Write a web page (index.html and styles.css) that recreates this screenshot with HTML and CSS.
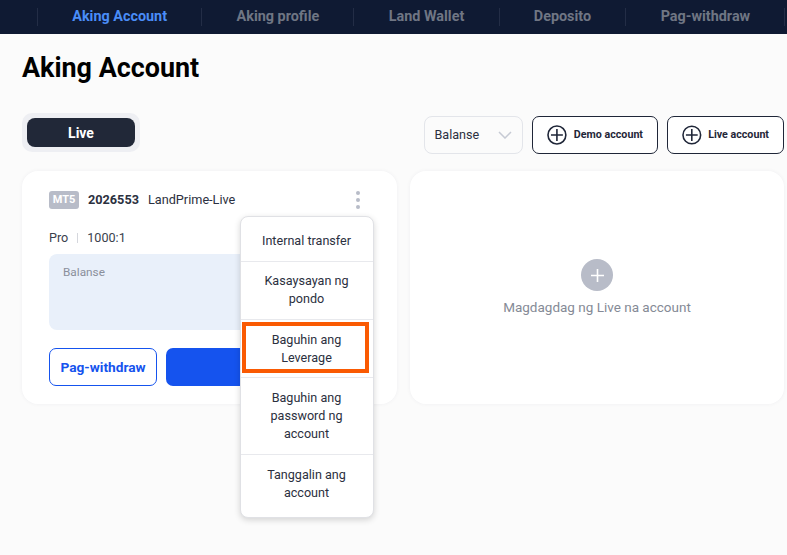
FILE: index.html
```html
<!DOCTYPE html>
<html lang="tl">
<head>
<meta charset="utf-8">
<title>Aking Account</title>
<link rel="stylesheet" href="styles.css">
</head>
<body>
<nav class="nav">
  <a class="nav-item active">Aking Account</a>
  <a class="nav-item">Aking profile</a>
  <a class="nav-item">Land Wallet</a>
  <a class="nav-item">Deposito</a>
  <a class="nav-item last">Pag-withdraw</a>
</nav>
<main class="page">
  <h1 class="title">Aking Account</h1>
  <div class="toolbar">
    <div class="tabs"><button class="tab">Live</button></div>
    <div class="actions">
      <div class="select">
        <span class="select-label">Balanse</span>
        <svg class="chev" width="14" height="8" viewBox="0 0 14 8"><path d="M1 1l6 6 6-6" fill="none" stroke="#c6cad4" stroke-width="1.5"/></svg>
      </div>
      <button class="add-btn demo">
        <svg width="20" height="20" viewBox="0 0 20 20"><circle cx="10" cy="10" r="9" fill="none" stroke="#1f2638" stroke-width="1.6"/><path d="M10 4v12M4 10h12" stroke="#1f2638" stroke-width="1.6"/></svg>
        <span class="add-label">Demo account</span>
      </button>
      <button class="add-btn live">
        <svg width="20" height="20" viewBox="0 0 20 20"><circle cx="10" cy="10" r="9" fill="none" stroke="#1f2638" stroke-width="1.6"/><path d="M10 4v12M4 10h12" stroke="#1f2638" stroke-width="1.6"/></svg>
        <span class="add-label">Live account</span>
      </button>
    </div>
  </div>
  <div class="cards">
    <section class="card account">
      <div class="acc-head">
        <span class="badge">MT5</span>
        <b class="acc-no">2026553</b>
        <span class="acc-srv">LandPrime-Live</span>
        <span class="dots"><i></i><i></i><i></i></span>
      </div>
      <div class="acc-meta"><span>Pro</span><span class="sep"></span><span>1000:1</span></div>
      <div class="balance">Balanse</div>
      <div class="acc-actions">
        <button class="btn-outline">Pag-withdraw</button>
        <button class="btn-fill"></button>
      </div>
      <ul class="menu">
        <li>Internal transfer</li>
        <li>Kasaysayan ng<br>pondo</li>
        <li class="marked">Baguhin ang<br>Leverage</li>
        <li>Baguhin ang<br>password ng<br>account</li>
        <li>Tanggalin ang<br>account</li>
      </ul>
    </section>
    <section class="card empty">
      <span class="plus-circle">
        <svg width="13" height="13" viewBox="0 0 13 13"><path d="M6.5 0v13M0 6.5h13" stroke="#fff" stroke-width="1.6"/></svg>
      </span>
      <p class="empty-text">Magdagdag ng Live na account</p>
    </section>
  </div>
</main>
</body>
</html>
```

FILE: styles.css
```css
* { box-sizing: border-box; }
html, body { margin: 0; height: 100%; }
body {
  background: #fbfbfb;
  font-family: Roboto, "Liberation Sans", sans-serif;
  color: #1f2638;
  overflow: hidden;
}
button { font-family: inherit; cursor: pointer; }

.nav {
  display: flex;
  align-items: center;
  height: 34px;
  padding-left: 37px;
  background: #0f1a33;
}
.nav-item {
  height: 18px;
  padding: 0 34.25px;
  border-left: 1px solid #232d46;
  color: #6f7684;
  font-size: 14.4px;
  font-weight: 700;
  line-height: 18px;
  white-space: nowrap;
}
.nav-item.active { color: #4a8df8; }
.nav-item.last { border-right: 1px solid #232d46; }

.page { padding: 0 3px 0 22px; }
.title {
  margin: 0;
  padding-top: 18px;
  font-size: 26.9px;
  font-weight: 700;
  line-height: 32px;
  color: #000;
}

.toolbar {
  display: flex;
  justify-content: space-between;
  align-items: flex-start;
  margin-top: 29px;
}
.tabs {
  width: 118px;
  height: 39px;
  padding: 5px;
  border-radius: 10px;
  background: #eeeff3;
}
.tab {
  display: block;
  width: 100%;
  height: 29px;
  border: 0;
  border-radius: 8px;
  background: #212838;
  color: #fff;
  font-size: 14px;
  font-weight: 700;
}
.actions {
  display: flex;
  gap: 9px;
  margin-top: 3px;
}
.select {
  display: flex;
  align-items: center;
  justify-content: space-between;
  width: 99px;
  height: 38px;
  padding: 0 10px 0 9.5px;
  border: 1px solid #e3e5ea;
  border-radius: 8px;
  font-size: 12.6px;
  color: #2b3040;
}
.select-label { padding-bottom: 1px; }
.add-btn {
  display: flex;
  align-items: center;
  gap: 7px;
  height: 38px;
  padding: 0 14px;
  border: 1px solid #1f2638;
  border-radius: 7px;
  background: #fff;
  color: #1f2638;
  font-size: 10.7px;
  font-weight: 700;
  white-space: nowrap;
}
.add-label { padding-bottom: 2px; }
.add-btn.live { gap: 6.5px; }
.add-btn.demo { width: 126px; }
.add-btn.live { width: 117px; }

.cards {
  display: flex;
  gap: 13px;
  margin-top: 17px;
}
.card {
  height: 233px;
  border-radius: 16px;
  background: #fff;
  box-shadow: 0 0 4px rgba(30, 40, 70, .05);
}
.account {
  position: relative;
  width: 375px;
  padding: 20px 27px;
}
.acc-head {
  display: flex;
  align-items: center;
  height: 18px;
  font-size: 12.7px;
}
.badge {
  width: 30px;
  height: 18px;
  border-radius: 3px;
  background: #b8bcc8;
  color: #fff;
  font-size: 11px;
  font-weight: 700;
  line-height: 18px;
  text-align: center;
}
.acc-no { margin-left: 9px; padding-bottom: 1px; font-weight: 700; color: #2b3040; }
.acc-srv { margin-left: 9px; padding-bottom: 1px; color: #2b3040; }
.dots {
  display: flex;
  flex-direction: column;
  gap: 3px;
  margin-left: auto;
  margin-right: 10px;
}
.dots i {
  display: block;
  width: 4px;
  height: 4px;
  border-radius: 50%;
  background: #b8bcc8;
}
.acc-meta {
  display: flex;
  align-items: center;
  gap: 9px;
  margin-top: 20px;
  font-size: 12.6px;
  line-height: 18px;
  color: #3a3f4d;
}
.sep { width: 1px; height: 10px; background: #d5d7dd; }
.balance {
  height: 76px;
  margin-top: 7px;
  padding: 10px 14px;
  border-radius: 8px;
  background: #e9f0fa;
  color: #8a8f9b;
  font-size: 11.8px;
  line-height: 16px;
}
.acc-actions {
  display: flex;
  gap: 9px;
  margin-top: 18px;
}
.btn-outline {
  width: 108px;
  height: 38px;
  border: 1px solid #1553ee;
  border-radius: 7px;
  background: #fff;
  color: #1553ee;
  font-size: 13.7px;
  font-weight: 700;
}
.btn-fill {
  flex: 1;
  height: 38px;
  border: 0;
  border-radius: 7px;
  background: #1553ee;
}

.menu {
  position: absolute;
  top: 45px;
  left: 217.5px;
  width: 134px;
  margin: 0;
  padding: 4px 0;
  list-style: none;
  background: #fff;
  border: 1px solid #e0e1e5;
  border-radius: 8px;
  box-shadow: 0 2px 6px rgba(0, 0, 0, .16);
  font-size: 12.6px;
  line-height: 18px;
  text-align: center;
  color: #2b3040;
}
.menu li { padding: 10.7px 8px; border-top: 1px solid #e8e9ed; }
.menu li:first-child { border-top: 0; padding-top: 11px; }
.menu li:last-child { padding-bottom: 11.5px; }
.marked { position: relative; }
.marked::after {
  content: "";
  position: absolute;
  inset: 2px 3.5px 4px 1.5px;
  border: 4px solid #fa5a02;
}

.empty {
  flex: 1;
  display: flex;
  flex-direction: column;
  align-items: center;
  padding-top: 88px;
}
.plus-circle {
  display: flex;
  align-items: center;
  justify-content: center;
  width: 32px;
  height: 32px;
  border-radius: 50%;
  background: #b8bcc8;
}
.empty-text {
  margin: 7px 0 0;
  font-size: 13.5px;
  line-height: 18px;
  color: #858a96;
}
```
